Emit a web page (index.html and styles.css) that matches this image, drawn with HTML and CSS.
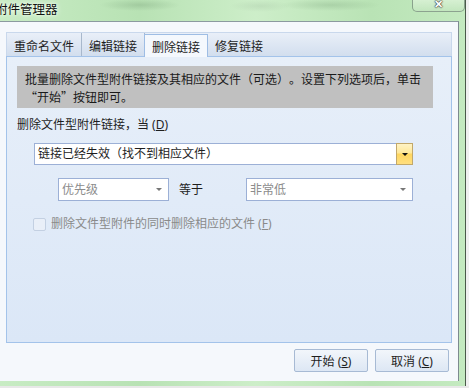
FILE: index.html
```html
<!DOCTYPE html>
<html lang="zh-CN">

<head>
    <meta charset="UTF-8">
    <title>附件管理器</title>
    <link rel="stylesheet" href="styles.css">
</head>

<body>
    <div class="desktop">
        <div class="frame">
            <!-- Barra de título -->
            <div class="titlebar">
                <span class="title">附件管理器</span>
                <div class="close-btn">✕</div>
            </div>

            <div class="client">
                <div class="tabs">
                    <div class="tab">重命名文件</div>
                    <div class="tab">编辑链接</div>
                    <div class="tab active">删除链接</div>
                    <div class="tab last">修复链接</div>
                </div>

                <div class="panel">
                    <div class="info">批量删除文件型附件链接及其相应的文件（可选）。设置下列选项后，单击<br>“开始”按钮即可。</div>

                    <p class="label">删除文件型附件链接，当 (<u>D</u>)</p>

                    <div class="combo main-combo">
                        <span class="combo-text">链接已经失效（找不到相应文件）</span>
                        <span class="combo-btn"><span class="arrow"></span></span>
                    </div>

                    <div class="row">
                        <div class="combo small-combo disabled">
                            <span class="combo-text">优先级</span>
                            <span class="arrow gray"></span>
                        </div>
                        <span class="equals">等于</span>
                        <div class="combo wide-combo disabled">
                            <span class="combo-text">非常低</span>
                            <span class="arrow gray"></span>
                        </div>
                    </div>

                    <label class="check">
                        <span class="box"></span>
                        删除文件型附件的同时删除相应的文件 (<u>F</u>)
                    </label>
                </div>

                <div class="buttons">
                    <button class="btn">开始 (<u>S</u>)</button>
                    <button class="btn">取消 (<u>C</u>)</button>
                </div>
            </div>
        </div>
        <div class="side-strip"></div>
    </div>
    <div class="bottom-strip"></div>
</body>

</html>
```

FILE: styles.css
```css
body {
    margin: 0;
    width: 469px;
    height: 388px;
    overflow: hidden;
    background-color: #f4f4f4;
    font-family: "Noto Sans", "Noto Sans CJK SC", sans-serif;
    font-size: 12px;
    color: #1e1e1e;
    text-spacing-trim: space-all;
}

.desktop {
    display: flex;
    height: 386px;
}

.frame {
    width: 459px;
    padding-right: 6px;
    padding-bottom: 5px;
    border-right: 1px solid #4a5a4a;
    background: linear-gradient(90deg, #c8ecc4 0%, #b8e2b4 30%, #cdeec9 55%, #b9e3b5 80%, #c4eac0 100%);
    display: flex;
    flex-direction: column;
}

.side-strip {
    flex: 1;
    background-color: #f0f0f0;
}

.bottom-strip {
    height: 2px;
    background-color: #e8e8e8;
}

/* Barra de título */
.titlebar {
    height: 21px;
    display: flex;
    align-items: flex-start;
    background:
        radial-gradient(ellipse 40px 6px at 140px 5px, rgba(120, 160, 120, 0.35), transparent),
        radial-gradient(ellipse 50px 6px at 330px 5px, rgba(120, 160, 120, 0.3), transparent),
        radial-gradient(ellipse 30px 6px at 260px 6px, rgba(150, 180, 150, 0.25), transparent);
}

.title {
    margin-left: -5px;
    margin-top: 1px;
    font-family: "Noto Sans CJK SC", sans-serif;
    font-size: 12.5px;
    line-height: 15px;
    color: #111;
    text-shadow: 0 0 6px #ffffff, 0 0 3px #f0fff0;
}

.close-btn {
    margin-left: auto;
    margin-right: -6px;
    width: 51px;
    height: 11px;
    border: 1px solid rgba(80, 100, 90, 0.55);
    border-top: none;
    border-radius: 0 0 5px 5px;
    background: linear-gradient(#d6f0d2, #c2e6be);
    color: #fff;
    font-size: 11px;
    font-weight: bold;
    line-height: 7px;
    text-align: center;
    text-shadow: 0 0 1px #333, 0 0 1px #333, 0 0 2px #444;
}

.client {
    flex: 1;
    background-color: #f5f8fc;
    border-top: 1px solid #8c9aa0;
    border-right: 1px solid #7d8a90;
    padding: 10px 6px 0 6px;
    display: flex;
    flex-direction: column;
}

/* Pestañas */
.tabs {
    display: flex;
    height: 24px;
    background: linear-gradient(#e9eff8, #d2deee);
    border: 1px solid #c9d8ec;
    border-bottom: none;
    box-sizing: border-box;
}

.tab {
    padding: 0 7px;
    line-height: 26px;
    font-family: "Noto Sans CJK SC", sans-serif;
    border-right: 1px solid #a8b8cc;
}

.tab.active {
    margin-top: 1px;
    line-height: 24px;
    background-color: #f4f8fd;
    border: 1px solid #9ebde4;
    border-bottom: none;
    margin-left: -1px;
    margin-bottom: -1px;
    position: relative;
}

.tab.last {
    border-right: none;
}

.panel {
    height: 287px;
    border: 1px solid #a3c3ea;
    background: linear-gradient(#e7eff9, #dbe7f7);
    padding: 9px 18px 0 10px;
    box-sizing: border-box;
}

.info {
    background-color: #c0c0c0;
    padding: 4px 8px 2px;
    line-height: 18px;
    font-family: "Noto Sans CJK SC", sans-serif;
    color: #1a1a1a;
}

.label {
    margin: 8px 0 0;
    line-height: 18px;
}

/* Listas desplegables */
.combo {
    display: flex;
    align-items: center;
    height: 22px;
    background-color: #fff;
    border: 1px solid #9cb0d6;
    box-sizing: border-box;
}

.combo-text {
    flex: 1;
    padding-left: 3px;
    line-height: 20px;
}

.main-combo {
    margin: 9px 20px 0 17px;
}

.combo-btn {
    width: 17px;
    height: 22px;
    margin: -1px -1px -1px 0;
    box-sizing: border-box;
    border: 1px solid #c2a86a;
    background: linear-gradient(#fff3c4 0%, #ffe89a 45%, #ffd65e 50%, #ffdf80 100%);
    display: flex;
    align-items: center;
    justify-content: center;
}

.arrow {
    width: 0;
    height: 0;
    border-left: 3px solid transparent;
    border-right: 3px solid transparent;
    border-top: 3px solid #111;
}

.arrow.gray {
    border-top-color: #777;
    margin-right: 6px;
}

.row {
    display: flex;
    align-items: center;
    margin: 13px 20px 0 41px;
    height: 23px;
}

.row .combo {
    height: 23px;
}

.disabled .combo-text {
    color: #8c8c8c;
}

.small-combo {
    width: 111px;
}

.equals {
    margin: 0 auto 0 10px;
    line-height: 18px;
}

.wide-combo {
    width: 167px;
}

.check {
    display: flex;
    align-items: center;
    margin: 16px 0 0 16px;
    color: #8a8a8a;
    line-height: 14px;
}

.box {
    width: 11px;
    height: 11px;
    border: 1px solid #c3d0e2;
    border-radius: 2px;
    background-color: #e9eff8;
    margin-right: 5px;
}

/* Botones */
.buttons {
    display: flex;
    justify-content: flex-end;
    gap: 7px;
    margin: 6px 3px 0 0;
}

.btn {
    width: 74px;
    height: 23px;
    padding: 0;
    border: 1px solid #a7bad4;
    border-radius: 2px;
    background: linear-gradient(#f2f6fb, #dde7f4);
    font-family: "Noto Sans", "Noto Sans CJK SC", sans-serif;
    font-size: 12px;
    color: #1e1e1e;
}
```
